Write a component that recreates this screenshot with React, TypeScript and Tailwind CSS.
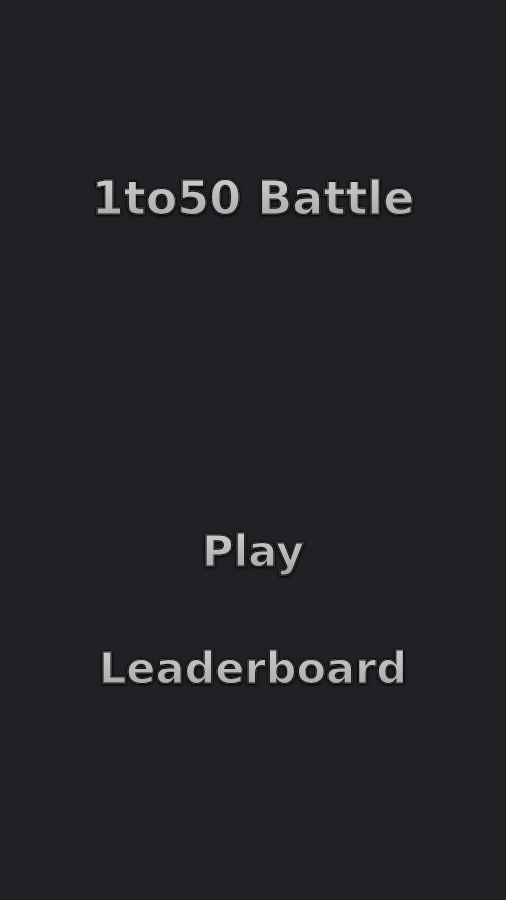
import React from "react";

const txt =
  "font-['DejaVu_Sans',sans-serif] font-bold bg-gradient-to-b from-[#d2d2d2] to-[#a4a4a4] bg-clip-text text-transparent [-webkit-text-stroke:1.2px_#141414] [filter:drop-shadow(0_0_0.8px_#000)_drop-shadow(0_1px_1px_rgba(0,0,0,0.7))]";

export default function App() {
  return (
    <div className="w-[506px] h-[900px] bg-[#202124] flex flex-col items-center">
      <h1 className={`mt-[170px] text-[46px] leading-[56px] ${txt}`}>1to50 Battle</h1>
      <button className={`mt-[300px] text-[43px] leading-[50px] ${txt}`}>Play</button>
      <button className={`mt-[67px] text-[43px] leading-[50px] ${txt}`}>Leaderboard</button>
    </div>
  );
}
